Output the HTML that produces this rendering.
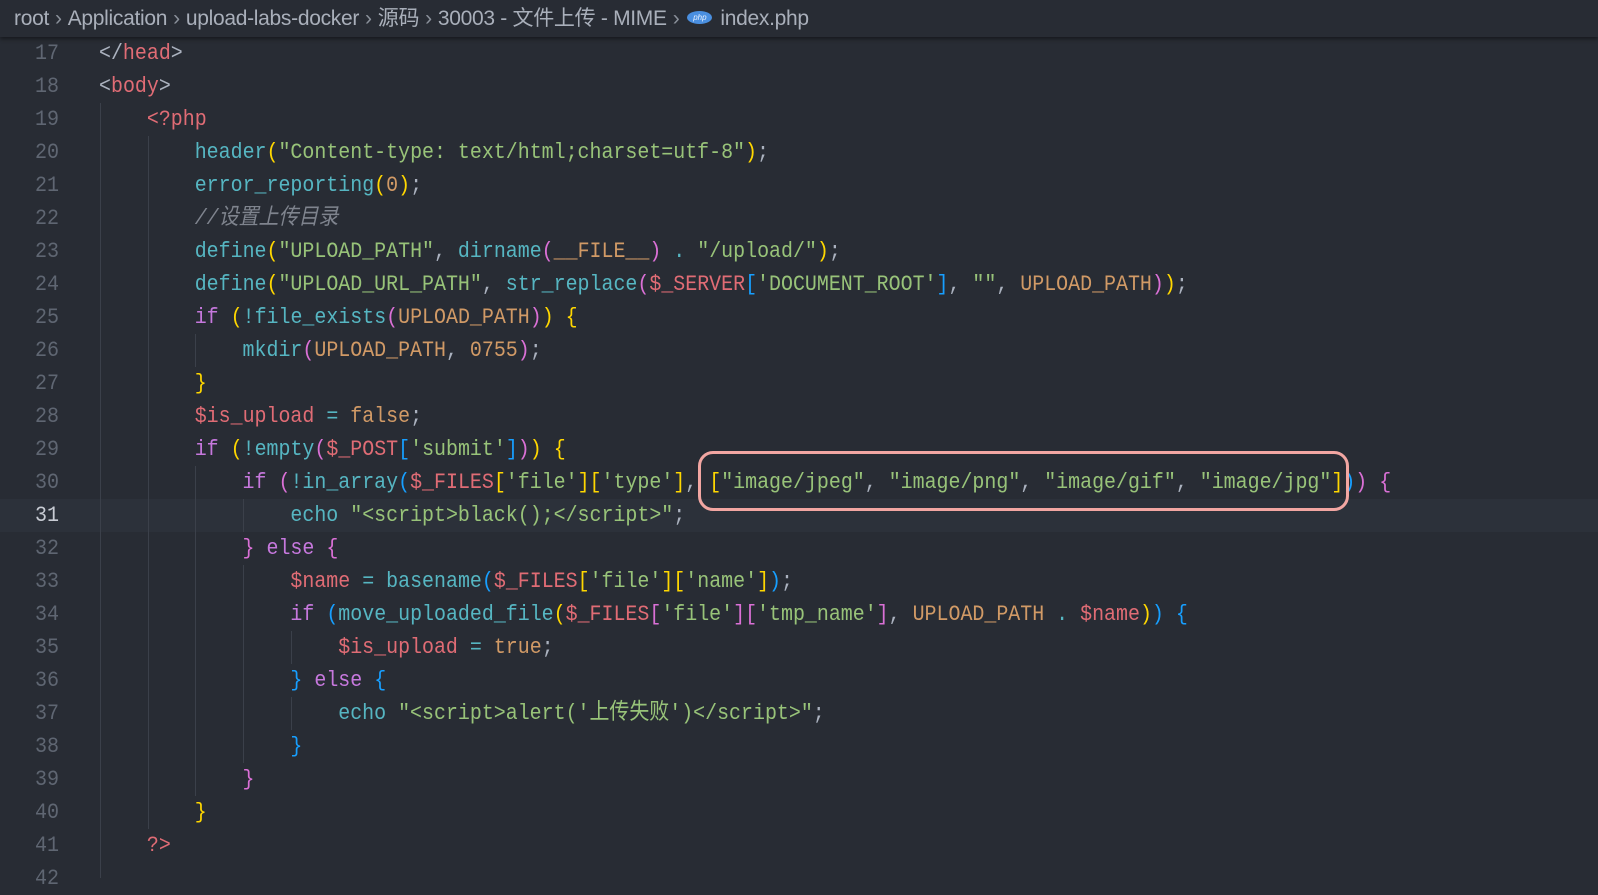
<!DOCTYPE html>
<html><head><meta charset="utf-8"><style>
body{margin:0;width:1598px;height:875px;background:#282c34;overflow:hidden;position:relative;font-family:"Liberation Mono",monospace}
.bc{position:absolute;left:0;top:0;width:1598px;height:37px;background:#282c34;box-shadow:0 2px 4px rgba(0,0,0,.45);z-index:3;font-family:"Liberation Sans","Noto Sans CJK SC",sans-serif;font-size:21px;color:#a9afba;line-height:37px;padding-left:14px;box-sizing:border-box;white-space:nowrap;letter-spacing:-0.3px}
.bc .sep{color:#8a909a;margin:0 6px}
.php{display:inline-block;width:25px;height:13px;border-radius:50%;background:#4a8fe0;color:#e6f0ff;font-size:8px;line-height:13px;text-align:center;font-style:italic;vertical-align:middle;margin:0 8px 3px 2px;letter-spacing:0}
.ln{position:absolute;left:0;width:59px;text-align:right;font-size:22.5px;color:#5f6672;height:33px;line-height:33px;transform:scaleX(.89);transform-origin:right}
.ln.cur{color:#c8ccd4}
.cl{position:absolute;left:99px;height:33px;line-height:33px;font-size:22.5px;white-space:pre;color:#abb2bf;transform:scaleX(.886);transform-origin:left}
.hl{position:absolute;left:0;top:498.5px;width:1598px;height:33px;background:#2c313a}
.g{position:absolute;width:1px;background:#3b404a}
.f{color:#56b6c2}.s{color:#98c379}.k{color:#c678dd}.v{color:#e06c75}.c{color:#d19a66}.y{color:#ffd700}.p{color:#da70d6}.b{color:#179fff}.t{color:#e06c75}.cm{color:#7f848e;font-style:italic;font-family:"Liberation Mono","Noto Sans CJK SC",monospace}
.cj{font-family:"Liberation Mono","Noto Sans CJK SC",monospace}
.box{position:absolute;left:698px;top:451px;width:645px;height:54px;border:3px solid #f2a6a2;border-radius:15px}
</style></head><body>
<div class="bc">root<span class="sep">›</span>Application<span class="sep">›</span>upload-labs-docker<span class="sep">›</span>源码<span class="sep">›</span>30003 - 文件上传 - MIME<span class="sep">›</span><span class="php">php</span>index.php</div>
<div class="hl"></div>
<div class="g" style="left:100px;top:102.5px;height:775px"></div>
<div class="g" style="left:148px;top:135.5px;height:693px"></div>
<div class="g" style="left:195px;top:333.5px;height:33px"></div>
<div class="g" style="left:195px;top:465.5px;height:330px"></div>
<div class="g" style="left:243px;top:498.5px;height:33px"></div>
<div class="g" style="left:243px;top:564.5px;height:198px"></div>
<div class="g" style="left:291px;top:630.5px;height:33px"></div>
<div class="g" style="left:291px;top:696.5px;height:33px"></div>

<div class="ln" style="top:36.5px">17</div><div class="cl" style="top:36.5px">&lt;/<span class="t">head</span>&gt;</div>
<div class="ln" style="top:69.5px">18</div><div class="cl" style="top:69.5px">&lt;<span class="t">body</span>&gt;</div>
<div class="ln" style="top:102.5px">19</div><div class="cl" style="top:102.5px">    <span class="t">&lt;?php</span></div>
<div class="ln" style="top:135.5px">20</div><div class="cl" style="top:135.5px">        <span class="f">header</span><span class="y">(</span><span class="s">"Content-type: text/html;charset=utf-8"</span><span class="y">)</span>;</div>
<div class="ln" style="top:168.5px">21</div><div class="cl" style="top:168.5px">        <span class="f">error_reporting</span><span class="y">(</span><span class="c">0</span><span class="y">)</span>;</div>
<div class="ln" style="top:201.5px">22</div><div class="cl" style="top:201.5px">        <span class="cm">//设置上传目录</span></div>
<div class="ln" style="top:234.5px">23</div><div class="cl" style="top:234.5px">        <span class="f">define</span><span class="y">(</span><span class="s">"UPLOAD_PATH"</span>, <span class="f">dirname</span><span class="p">(</span><span class="c">__FILE__</span><span class="p">)</span> <span class="f">.</span> <span class="s">"/upload/"</span><span class="y">)</span>;</div>
<div class="ln" style="top:267.5px">24</div><div class="cl" style="top:267.5px">        <span class="f">define</span><span class="y">(</span><span class="s">"UPLOAD_URL_PATH"</span>, <span class="f">str_replace</span><span class="p">(</span><span class="v">$_SERVER</span><span class="b">[</span><span class="s">'DOCUMENT_ROOT'</span><span class="b">]</span>, <span class="s">""</span>, <span class="c">UPLOAD_PATH</span><span class="p">)</span><span class="y">)</span>;</div>
<div class="ln" style="top:300.5px">25</div><div class="cl" style="top:300.5px">        <span class="k">if</span> <span class="y">(</span><span class="f">!file_exists</span><span class="p">(</span><span class="c">UPLOAD_PATH</span><span class="p">)</span><span class="y">)</span> <span class="y">{</span></div>
<div class="ln" style="top:333.5px">26</div><div class="cl" style="top:333.5px">            <span class="f">mkdir</span><span class="p">(</span><span class="c">UPLOAD_PATH</span>, <span class="c">0755</span><span class="p">)</span>;</div>
<div class="ln" style="top:366.5px">27</div><div class="cl" style="top:366.5px">        <span class="y">}</span></div>
<div class="ln" style="top:399.5px">28</div><div class="cl" style="top:399.5px">        <span class="v">$is_upload</span> <span class="f">=</span> <span class="c">false</span>;</div>
<div class="ln" style="top:432.5px">29</div><div class="cl" style="top:432.5px">        <span class="k">if</span> <span class="y">(</span><span class="f">!empty</span><span class="p">(</span><span class="v">$_POST</span><span class="b">[</span><span class="s">'submit'</span><span class="b">]</span><span class="p">)</span><span class="y">)</span> <span class="y">{</span></div>
<div class="ln" style="top:465.5px">30</div><div class="cl" style="top:465.5px">            <span class="k">if</span> <span class="p">(</span><span class="f">!in_array</span><span class="b">(</span><span class="v">$_FILES</span><span class="y">[</span><span class="s">'file'</span><span class="y">][</span><span class="s">'type'</span><span class="y">]</span>, <span class="y">[</span><span class="s">"image/jpeg"</span>, <span class="s">"image/png"</span>, <span class="s">"image/gif"</span>, <span class="s">"image/jpg"</span><span class="y">]</span><span class="b">)</span><span class="p">)</span> <span class="p">{</span></div>
<div class="ln cur" style="top:498.5px">31</div><div class="cl" style="top:498.5px">                <span class="f">echo</span> <span class="s">"&lt;script&gt;black();&lt;/script&gt;"</span>;</div>
<div class="ln" style="top:531.5px">32</div><div class="cl" style="top:531.5px">            <span class="p">}</span> <span class="k">else</span> <span class="p">{</span></div>
<div class="ln" style="top:564.5px">33</div><div class="cl" style="top:564.5px">                <span class="v">$name</span> <span class="f">=</span> <span class="f">basename</span><span class="b">(</span><span class="v">$_FILES</span><span class="y">[</span><span class="s">'file'</span><span class="y">][</span><span class="s">'name'</span><span class="y">]</span><span class="b">)</span>;</div>
<div class="ln" style="top:597.5px">34</div><div class="cl" style="top:597.5px">                <span class="k">if</span> <span class="b">(</span><span class="f">move_uploaded_file</span><span class="y">(</span><span class="v">$_FILES</span><span class="p">[</span><span class="s">'file'</span><span class="p">][</span><span class="s">'tmp_name'</span><span class="p">]</span>, <span class="c">UPLOAD_PATH</span> <span class="f">.</span> <span class="v">$name</span><span class="y">)</span><span class="b">)</span> <span class="b">{</span></div>
<div class="ln" style="top:630.5px">35</div><div class="cl" style="top:630.5px">                    <span class="v">$is_upload</span> <span class="f">=</span> <span class="c">true</span>;</div>
<div class="ln" style="top:663.5px">36</div><div class="cl" style="top:663.5px">                <span class="b">}</span> <span class="k">else</span> <span class="b">{</span></div>
<div class="ln" style="top:696.5px">37</div><div class="cl" style="top:696.5px">                    <span class="f">echo</span> <span class="s cj">"&lt;script&gt;alert('上传失败')&lt;/script&gt;"</span>;</div>
<div class="ln" style="top:729.5px">38</div><div class="cl" style="top:729.5px">                <span class="b">}</span></div>
<div class="ln" style="top:762.5px">39</div><div class="cl" style="top:762.5px">            <span class="p">}</span></div>
<div class="ln" style="top:795.5px">40</div><div class="cl" style="top:795.5px">        <span class="y">}</span></div>
<div class="ln" style="top:828.5px">41</div><div class="cl" style="top:828.5px">    <span class="t">?&gt;</span></div>
<div class="ln" style="top:861.5px">42</div>
<div class="box"></div>
</body></html>
